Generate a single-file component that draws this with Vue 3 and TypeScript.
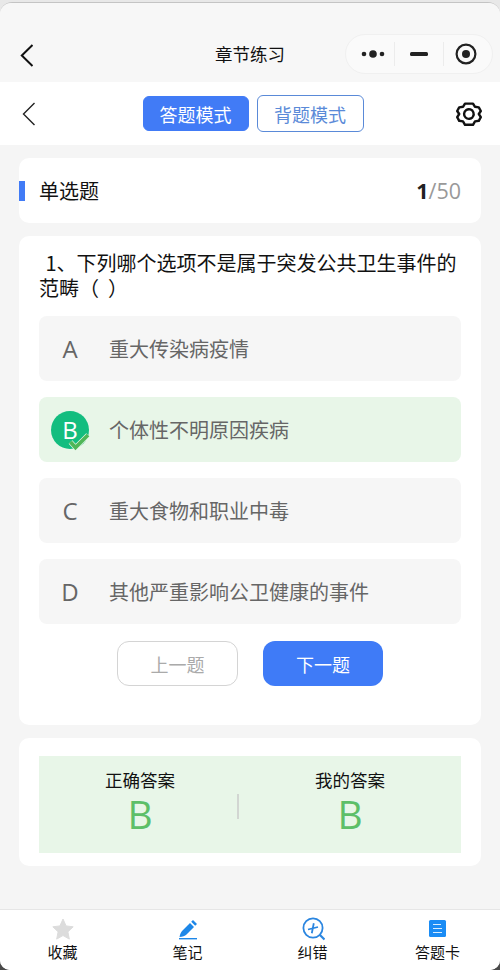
<script setup lang="ts">
interface Option { key: string; text: string; correct?: boolean }
const options: Option[] = [
  { key: 'A', text: '重大传染病疫情' },
  { key: 'B', text: '个体性不明原因疾病', correct: true },
  { key: 'C', text: '重大食物和职业中毒' },
  { key: 'D', text: '其他严重影响公卫健康的事件' },
]
</script>

<template>
  <div class="phone">
    <header class="nav">
      <svg class="nav-back" width="14" height="23" viewBox="0 0 14 23"><path d="M12.500 1 1.800 11.500l10.700 10.500" fill="none" stroke="#111" stroke-width="2"/></svg>
      <span class="nav-title">章节练习</span>
      <div class="capsule">
        <span class="cap-cell">
          <svg class="dots" width="24" height="10" viewBox="0 0 24 10"><circle cx="3" cy="5" r="2.300" fill="#222"/><circle cx="12" cy="5" r="3.800" fill="#222"/><circle cx="21" cy="5" r="2.300" fill="#222"/></svg>
        </span>
        <span class="cap-cell">
          <svg width="18" height="4" viewBox="0 0 18 4"><rect width="18" height="4" rx="1.500" fill="#222"/></svg>
        </span>
        <span class="cap-cell">
          <svg class="record" width="22" height="22" viewBox="0 0 22 22"><circle cx="11" cy="11" r="9.400" fill="none" stroke="#222" stroke-width="2.200"/><circle cx="11" cy="11" r="4" fill="#222"/></svg>
        </span>
      </div>
    </header>

    <div class="subbar">
      <svg class="sub-back" width="14" height="24" viewBox="0 0 14 24"><path d="M12.500 1 1.500 12l11 11" fill="none" stroke="#222" stroke-width="1.400"/></svg>
      <div class="modes">
        <span class="mode active">答题模式</span>
        <span class="mode">背题模式</span>
      </div>
      <svg class="gear" width="26" height="26" viewBox="0 0 26 26" fill="none" stroke="#111" stroke-width="2.400" stroke-linejoin="round" stroke-linecap="round">
        <path d="M9 2.600h8l2 3.200 3.800.6 2 3.600-2 3 2 3.200-2 3.600-3.800.6-2 3.400H9l-2-3.400-3.800-.6-2-3.600 2-3.200-2-3 2-3.600L7 5.800z"/>
        <path d="M17 15.500A4.800 4.800 0 1 0 13.500 17.800c1.200 0 2.200-.5 2.800-1.300"/>
      </svg>
    </div>

    <main class="content">
      <section class="card type-card">
        <span class="type-name">单选题</span>
        <span class="count"><b>1</b>/50</span>
      </section>

      <section class="card question-card">
        <p class="question">&nbsp;1、下列哪个选项不是属于突发公共卫生事件的范畴（&nbsp;&nbsp;）</p>
        <ul class="options">
          <li v-for="o in options" :key="o.key" class="option" :class="{ correct: o.correct }">
            <span v-if="o.correct" class="badge">
              {{ o.key }}
              <svg class="tick" width="22" height="19" viewBox="0 0 22 19"><path d="M2.500 10 7.500 15.500 20 3" fill="none" stroke="#e8f6e8" stroke-width="5"/><path d="M2.500 10 7.500 15.500 20 3" fill="none" stroke="#4fb657" stroke-width="3.800"/></svg>
            </span>
            <span v-else class="letter">{{ o.key }}</span>
            <span class="opt-text">{{ o.text }}</span>
          </li>
        </ul>
        <div class="actions">
          <span class="btn prev">上一题</span>
          <span class="btn next">下一题</span>
        </div>
      </section>

      <section class="card answer-card">
        <div class="answer-box">
          <div class="answer first">
            <span class="ans-label">正确答案</span>
            <span class="ans-value">B</span>
          </div>
          <div class="ans-divider"></div>
          <div class="answer">
            <span class="ans-label">我的答案</span>
            <span class="ans-value">B</span>
          </div>
        </div>
      </section>
    </main>

    <footer class="tabs">
      <div class="tab">
        <svg width="24" height="24" viewBox="0 0 24 24"><path d="M12 2l3.100 6.900 7.100.9-5.300 5 1.400 7.300L12 18.500l-6.300 3.600 1.400-7.300-5.300-5 7.100-.9z" fill="#dcdcdc" stroke="#dcdcdc" stroke-linejoin="round"/></svg>
        <span>收藏</span>
      </div>
      <div class="tab">
        <svg width="24" height="24" viewBox="0 0 24 24"><path d="M3.500 20c.5-3 1.500-5 3-6.500l7.500-7.500 4 4-7.500 7.500c-1.500 1.500-4 2.300-7 2.500zM15.200 4.800 17 3l4 4-1.800 1.800z" fill="#1d87e8"/><rect x="3" y="21" width="18" height="1.400" fill="#1d87e8"/></svg>
        <span>笔记</span>
      </div>
      <div class="tab">
        <svg width="24" height="24" viewBox="0 0 24 24" fill="none" stroke="#2b86e0"><circle cx="12" cy="11" r="9.600" stroke-width="1.800"/><path d="M19 18l4.500 4.500" stroke-width="2.200"/><path d="M7 12.500l10-2.500M12.800 6.200l-2 10" stroke-width="1.800"/></svg>
        <span>纠错</span>
      </div>
      <div class="tab">
        <svg width="24" height="24" viewBox="0 0 24 24"><rect x="3" y="3" width="17" height="17" rx="1.500" fill="#1a8cf5"/><path d="M7 7.500h8M7 11.500h9M7 15.500h9" stroke="#d6ecff" stroke-width="1.200"/></svg>
        <span>答题卡</span>
      </div>
    </footer>
  </div>
</template>

<style>
html, body { margin: 0; }
html { background: linear-gradient(#e8e8e8 50%, #4a4a4a 50%); }
</style>

<style scoped>
.phone {
  width: 500px;
  height: 968px;
  margin-top: 2px;
  box-sizing: border-box;
  display: flex;
  flex-direction: column;
  background: #f5f5f5;
  border-top: 1px solid #c4c4c4;
  border-radius: 12px 12px 10px 10px;
  overflow: hidden;
  font-family: "Noto Sans CJK SC", "Noto Sans", sans-serif;
  color: #111;
}
.nav {
  height: 79px;
  flex: none;
  box-sizing: border-box;
  padding: 31px 7px 0 20px;
  display: flex;
  align-items: flex-start;
  background: #f7f7f7;
  position: relative;
}
.nav-back { margin-top: 10px; }
.nav-title {
  position: absolute;
  left: 0;
  right: 0;
  top: 38px;
  text-align: center;
  font-size: 17.500px;
  line-height: 26px;
}
.capsule {
  margin-left: auto;
  width: 148px;
  height: 40px;
  box-sizing: border-box;
  border: 1px solid #f0f0f0;
  border-radius: 20px;
  background: #fafafa;
  display: flex;
  align-items: center;
}
.cap-cell {
  flex: 1;
  height: 24px;
  display: flex;
  align-items: center;
  justify-content: center;
}
.cap-cell + .cap-cell { border-left: 1px solid #ececec; }
.dots { margin-left: 6px; }
.record { margin-right: 5px; }
.subbar {
  height: 63px;
  flex: none;
  box-sizing: border-box;
  padding: 0 18px 0 22px;
  display: flex;
  align-items: center;
  justify-content: space-between;
  background: #fff;
}
.modes {
  margin-left: 14px;
  display: flex;
  gap: 8px;
  align-items: center;
}
.mode {
  width: 107px;
  height: 37px;
  box-sizing: border-box;
  border: 1px solid #5a8ad8;
  border-radius: 6px;
  display: flex;
  align-items: center;
  justify-content: center;
  font-size: 18px;
  color: #5a8ad8;
}
.mode.active {
  width: 106px;
  height: 35px;
  background: #417bf6;
  border-color: #417bf6;
  color: #fff;
}
.content {
  flex: 1;
  min-height: 0;
  padding: 13px 19px 0;
  display: flex;
  flex-direction: column;
  gap: 13px;
}
.card {
  background: #fff;
  border-radius: 10px;
}
.type-card {
  height: 65px;
  flex: none;
  display: flex;
  align-items: center;
  justify-content: space-between;
  padding-right: 20px;
  font-size: 20px;
  position: relative;
  padding-left: 20px;
}
.type-card::before {
  content: "";
  position: absolute;
  left: 0;
  top: 23px;
  width: 6px;
  height: 20px;
  background: #417bf6;
}
.count {
  font-size: 21.500px;
  color: #999;
  font-family: "Open Sans", "Noto Sans", sans-serif;
}
.count b { color: #222; }
.question-card {
  height: 489px;
  flex: none;
  box-sizing: border-box;
  padding: 14px 20px 0;
}
.question {
  margin: 0;
  font-size: 20px;
  line-height: 25px;
  text-indent: 2px;
}
.options {
  list-style: none;
  margin: 16px 0 0;
  padding: 0;
  display: flex;
  flex-direction: column;
  gap: 16px;
}
.option {
  height: 65px;
  display: flex;
  align-items: center;
  background: #f6f6f6;
  border-radius: 8px;
  color: #666;
  font-size: 20px;
}
.option.correct { background: #e8f6e8; }
.letter, .badge {
  width: 38px;
  margin-left: 12px;
  flex: none;
  text-align: center;
  font-family: "Open Sans", "Noto Sans", sans-serif;
  font-size: 24px;
}
.badge {
  height: 38px;
  line-height: 38px;
  border-radius: 50%;
  background: #13bd7f;
  color: #fff;
  position: relative;
}
.tick {
  position: absolute;
  right: -1px;
  bottom: -2px;
}
.opt-text {
  margin-left: 20px;
  margin-top: -1px;
}
.actions {
  margin-top: 17px;
  display: flex;
  justify-content: center;
  gap: 25px;
}
.btn {
  width: 120px;
  height: 45px;
  box-sizing: border-box;
  border-radius: 12px;
  display: flex;
  align-items: center;
  justify-content: center;
  font-size: 18px;
}
.prev {
  width: 121px;
  border: 1px solid #d4d4d4;
  color: #aaa;
}
.next {
  background: #3f7bf7;
  color: #fff;
}
.answer-card {
  height: 128px;
  flex: none;
  box-sizing: border-box;
  padding: 18px 20px 13px;
}
.answer-box {
  height: 97px;
  background: #e8f6e8;
  display: flex;
  align-items: flex-start;
}
.answer {
  flex: 1;
  padding-top: 12px;
  display: flex;
  flex-direction: column;
  align-items: center;
}
.answer.first {
  flex: none;
  box-sizing: border-box;
  width: 198px;
  padding-left: 4px;
}
.ans-label {
  font-size: 17.500px;
  line-height: 24px;
}
.ans-value {
  font-family: "Open Sans", "Noto Sans", sans-serif;
  font-size: 39px;
  line-height: 44px;
  color: #5dbf68;
}
.ans-divider {
  width: 2px;
  height: 25px;
  margin-top: 38px;
  background: #d2d6d2;
  flex: none;
}
.tabs {
  height: 61px;
  flex: none;
  box-sizing: border-box;
  border-top: 1px solid #e6e6e6;
  background: #fff;
  display: flex;
  padding: 7px 0 0;
}
.tab {
  flex: 1;
  display: flex;
  flex-direction: column;
  align-items: center;
  font-size: 15px;
  line-height: 20px;
}
.tab svg { flex: none; margin-bottom: 1px; }
</style>
